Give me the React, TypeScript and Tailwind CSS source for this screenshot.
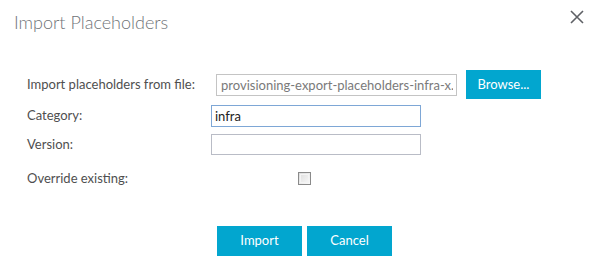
function CloseIcon() {
  return (
    <svg width="14" height="14" viewBox="0 0 14 14" className="text-[#5f6166]">
      <path d="M1 1 L13 13 M13 1 L1 13" stroke="currentColor" strokeWidth="1.6" fill="none" />
    </svg>
  );
}

export default function App() {
  return (
    <div
      className="w-[597px] h-[272px] bg-white relative text-[#4f4f4f]"
      style={{ fontFamily: "Lato, 'Open Sans', sans-serif" }}
    >
      <div className="flex items-start justify-between pl-[14px] pr-[13px] pt-[10px]">
        <h1 className="text-[18px] font-light text-[#6f7378] leading-[24px]">Import Placeholders</h1>
        <CloseIcon />
      </div>

      <div className="pl-[27px] pt-[36px] text-[13px]">
        <div className="flex items-center h-[29px]">
          <label className="w-[189px]">Import placeholders from file:</label>
          <div className="w-[241px] h-[22px] border border-[#c4c4c4] pl-[4px] text-[#7a7a7a] leading-[20px] overflow-hidden whitespace-nowrap">
            <span className="block w-[232px] overflow-hidden">provisioning-export-placeholders-infra-x.x-1</span>
          </div>
          <button className="ml-[9px] w-[75px] h-[29px] bg-[#02a6cf] text-white text-[13px]">Browse...</button>
        </div>

        <div className="flex items-center h-[22px] mt-[6px]">
          <label className="w-[184px]">Category:</label>
          <div className="w-[210px] h-[22px] border border-[#7ea7d6] px-[3px] text-[#222] leading-[20px]">infra</div>
        </div>

        <div className="flex items-center h-[21px] mt-[7px]">
          <label className="w-[184px]">Version:</label>
          <div className="w-[210px] h-[21px] border border-[#b9bcc6]"></div>
        </div>

        <div className="flex items-center h-[13px] mt-[17px]">
          <label className="w-[271px]">Override existing:</label>
          <div className="w-[13px] h-[13px] border border-[#8a8a8a] bg-gradient-to-br from-[#dcdcdc] to-[#fafafa] p-[1px]">
            <div className="w-full h-full border border-[#f4f4f4]"></div>
          </div>
        </div>
      </div>

      <div className="flex gap-[5px] pl-[217px] mt-[41px]">
        <button className="w-[85px] h-[30px] bg-[#02a6cf] text-white text-[13px]">Import</button>
        <button className="w-[85px] h-[30px] bg-[#02a6cf] text-white text-[13px]">Cancel</button>
      </div>
    </div>
  );
}
